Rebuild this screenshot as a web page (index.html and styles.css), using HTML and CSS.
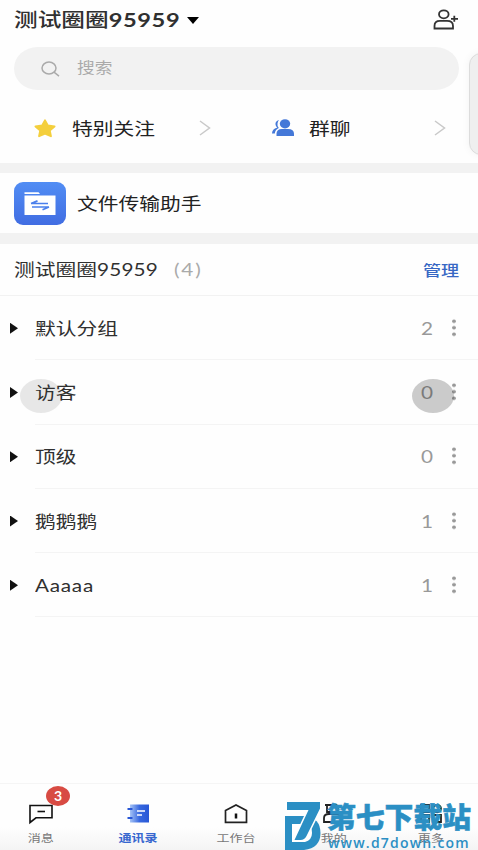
FILE: index.html
```html
<!DOCTYPE html>
<html lang="zh-CN">
<head>
<meta charset="utf-8">
<title>通讯录</title>
<link rel="stylesheet" href="styles.css">
</head>
<body>
<div class="app">
  <header class="header">
    <h1 class="title"><span class="wide">测试圈圈<b class="num">95959</b></span></h1>
    <svg class="caret" viewBox="0 0 12 7"><path d="M0 0h12L6 7z"/></svg>
    <svg class="add" viewBox="0 0 26 22"><g fill="none" stroke="#333" stroke-width="1.8"><ellipse cx="10.8" cy="5.3" rx="4.8" ry="4"/><path d="M1.5 19.5v-2.6q0-5 5.500-5h7q6 0 6 5v2.600z"/><path d="M21.300 6.800v6M18 9.800h7"/></g></svg>
  </header>
  <div class="search">
    <svg class="lens" viewBox="0 0 19 16"><g fill="none" stroke="#aaa" stroke-width="1.5"><ellipse cx="8" cy="7" rx="7" ry="5.9"/><path d="M13 11.2l5 4"/></g></svg>
    <span class="wide">搜索</span>
  </div>
  <div class="shortcuts">
    <div class="shortcut">
      <svg class="star" viewBox="0 0 22 19"><path d="M11 1.4l2.8 5.1 6.7 1-4.8 4 1.2 5.7L11 14.5l-5.9 2.7 1.2-5.7-4.8-4 6.7-1z" fill="#f4cf3c" stroke="#f4cf3c" stroke-width="2" stroke-linejoin="round"/></svg>
      <span class="label wide">特别关注</span>
      <svg class="chevron" viewBox="0 0 12 16"><path d="M1 1l9.500 7L1 15" fill="none" stroke="#c9c9c9" stroke-width="1.5"/></svg>
    </div>
    <div class="shortcut">
      <svg class="people" viewBox="0 0 22 18"><g fill="#4478d8"><ellipse cx="13" cy="4.8" rx="5.2" ry="4.6"/><path d="M4.500 17v-2.200q0-4.800 5.500-4.800h6q6 0 6 4.800V17z"/><path d="M7 1Q3 2 3.500 5.500q.2 1.800 1.800 3Q0 10 0 14.500h2.800q.3-3.800 4-5.500Q5 6.500 5.500 4.500 5.800 2 7 1z"/></g></svg>
      <span class="label wide">群聊</span>
      <svg class="chevron" viewBox="0 0 12 16"><path d="M1 1l9.500 7L1 15" fill="none" stroke="#c9c9c9" stroke-width="1.500"/></svg>
    </div>
  </div>
  <div class="band"></div>
  <div class="transfer">
    <svg class="folder" viewBox="0 0 52 43"><defs><linearGradient id="fg" x2="0" y2="1"><stop stop-color="#518df4"/><stop offset="1" stop-color="#416de2"/></linearGradient></defs><rect width="52" height="43" rx="9" fill="url(#fg)"/><path d="M10.500 10.300h14l1.500 1.700h-15.500zM10.500 13.500h31V33h-31z" fill="#fff"/><path d="M17 21.500h17M17 21.500l6.500-2.600M18 25h17M35 25l-6.500 2.700" fill="none" stroke="#4b80ec" stroke-width="1.700"/></svg>
    <span class="wide">文件传输助手</span>
  </div>
  <div class="band low"></div>
  <div class="team">
    <span class="name wide">测试圈圈<span class="num">95959</span></span>
    <span class="total wide">(4)</span>
    <a class="manage wide">管理</a>
  </div>
  <ul class="groups">
    <li class="group"><i class="arrow"></i><div class="line"><span class="wide">默认分组</span><span class="count wide">2</span><i class="dots"></i></div></li>
    <li class="group touched"><i class="arrow"></i><div class="line"><span class="wide">访客</span><span class="count wide">0</span><i class="dots"></i></div></li>
    <li class="group"><i class="arrow"></i><div class="line"><span class="wide">顶级</span><span class="count wide">0</span><i class="dots"></i></div></li>
    <li class="group"><i class="arrow"></i><div class="line"><span class="wide">鹅鹅鹅</span><span class="count wide">1</span><i class="dots"></i></div></li>
    <li class="group"><i class="arrow"></i><div class="line"><span class="wide latin">Aaaaa</span><span class="count wide">1</span><i class="dots"></i></div></li>
  </ul>
  <nav class="tabs">
    <div class="tab"><svg viewBox="0 0 26 22"><path d="M2 2.500h22v12.300H8l-6 4.700z" fill="none" stroke="#111" stroke-width="1.600"/><path d="M9.500 8.500h7.500" stroke="#111" stroke-width="1.600"/></svg><span class="wide">消息</span><em class="badge">3</em></div>
    <div class="tab active"><svg viewBox="0 0 26 22"><defs><linearGradient id="bg"><stop stop-color="#a5c3f6"/><stop offset=".5" stop-color="#3768df"/><stop offset="1" stop-color="#2857d6"/></linearGradient></defs><path d="M5 1.500h19v18H5z" fill="url(#bg)"/><path d="M2.500 6h5M2.500 15h5" stroke="#2857d6" stroke-width="1.800"/><path d="M12 8h8M12 12h5" stroke="#fff" stroke-width="1.600"/></svg><span class="wide">通讯录</span></div>
    <div class="tab"><svg viewBox="0 0 26 22"><path d="M2.500 7.500L13 2l10.500 5.500v11.800h-21z" fill="none" stroke="#222" stroke-width="1.700"/><path d="M13 10.500v5" stroke="#111" stroke-width="2.500"/></svg><span class="wide">工作台</span></div>
    <div class="tab"><svg viewBox="0 0 26 22"><g fill="none" stroke="#222" stroke-width="1.800"><path d="M5 2h10q3 0 3 3.500T15 9H7V2M4 19v-4q0-4 5-4h7q5 0 5 4v4z"/></g></svg><span class="wide">我的</span></div>
    <div class="tab"><svg viewBox="0 0 26 22"><g fill="none" stroke="#222" stroke-width="1.800"><path d="M3 2h8v7H3zM3 12h8v7H3zM15 12h8v7h-8z"/><ellipse cx="19" cy="5.500" rx="4" ry="3.500"/></g></svg><span class="wide">更多</span></div>
  </nav>
  <div class="drawer"></div>
  <div class="watermark">
    <svg class="mark" viewBox="0 0 36 48"><path d="M0 14h20q15.500 2 15.500 17T19 48H0V23z" fill="#2b8fc4"/><path d="M6 22h16q5 2 5 9t-7 9H6z" fill="#fff"/><path d="M0 22h7v26H0z" fill="#2b8fc4"/><path d="M2 0h33v6.500L21.500 34q-2 4-6 4H9.500L23.500 8H2z" fill="#2b8fc4" stroke="#fff" stroke-width="3" paint-order="stroke"/></svg>
    <div class="words"><strong class="brand">第七下载站</strong><span class="url">www.d7down.com</span></div>
  </div>
</div>
</body>
</html>
```
FILE: styles.css
```css
* { box-sizing: border-box; }
body { margin: 0; background: #fefefe; color: #303030; font: 17px/24px Lato, "Noto Sans CJK SC", sans-serif; }
svg { display: block; flex: none; }
.app { position: relative; width: 478px; height: 850px; overflow: hidden; display: flex; flex-direction: column; }
.wide { display: inline-block; white-space: nowrap; transform: scaleX(1.22); transform-origin: left center; }
.header { display: flex; align-items: center; height: 40px; padding: 0 19px 0 14px; flex: none; }
.title { margin: 0; width: 173px; font-size: 19.400px; font-weight: 500; }
.num { font-weight: inherit; letter-spacing: .15px; }
.title .num { font-weight: 700; letter-spacing: .5px; }
.caret { width: 12px; height: 7px; }
.add { width: 26px; height: 22px; margin-left: auto; }
.search { display: flex; align-items: center; height: 43px; margin: 7px 19px 0 14px; padding-left: 27px; border-radius: 24px / 22px; background: #f2f2f2; color: #aaa; font-size: 14.500px; flex: none; }
.search .wide { margin-top: -2px; }
.lens { width: 19px; height: 16px; margin-right: 17px; }
.shortcuts { display: grid; grid-template-columns: 238px 240px; height: 73px; flex: none; }
.shortcut { display: flex; align-items: center; padding: 3px 0 0 34px; }
.shortcut .label { width: 127px; padding-top: 2px; color: #222; }
.shortcut:last-child .label { width: 125px; }
.star { width: 22px; height: 19px; margin-right: 16px; }
.people { width: 22px; height: 18px; margin-right: 15px; }
.chevron { width: 12px; height: 16px; }
.band { height: 10px; background: #f2f2f2; flex: none; }
.transfer { display: flex; align-items: center; height: 60px; padding-left: 14px; color: #222; flex: none; }
.transfer .wide { padding-top: 2px; }
.folder { width: 52px; height: 43px; margin-right: 11px; }
.band.low { height: 11px; }
.team { display: flex; align-items: center; height: 52px; padding-left: 14px; border-bottom: 1px solid #f2f2f2; flex: none; }
.team .name { width: 160px; padding-top: 1px; }
.team .total { width: 249px; padding-top: 1px; color: #aaa; letter-spacing: 1.500px; }
.manage { color: #3767c4; font-size: 14.800px; font-weight: 500; }
.groups { list-style: none; margin: 0; padding: 0; }
.group { display: flex; align-items: center; position: relative; height: 64.300px; padding-left: 10px; }
.arrow { width: 8px; height: 11px; margin-right: 17px; background: #111; clip-path: polygon(0 0, 100% 50%, 0 100%); }
.line { display: flex; align-items: center; flex: 1; height: 100%; border-bottom: 1px solid #f4f4f4; }
.line .wide { padding-top: 2px; }
.latin { letter-spacing: .6px; }
.count { width: 31px; margin-left: auto; color: #999; }
.dots { width: 4px; height: 19.500px; margin-right: 22.500px; background: radial-gradient(circle, #999 1.500px, transparent 2.100px) 0 0 / 4px 6.500px; }
.touched::before, .touched::after { content: ""; position: absolute; top: 18.500px; width: 42px; height: 34px; border-radius: 50%; }
.touched::before { left: 20px; background: rgba(0, 0, 0, .09); }
.touched::after { left: 412px; background: rgba(0, 0, 0, .2); }
.tabs { display: flex; height: 67px; margin-top: auto; margin-left: -8px; border-top: 1px solid #f5f5f5; background: linear-gradient(#fefefe 65%, #f4f4f4); }
.tab { position: relative; display: flex; flex-direction: column; align-items: center; width: 97.500px; flex: none; padding-top: 19px; color: #777; font-size: 10.700px; line-height: 16px; }
.tab svg { width: 26px; height: 22px; }
.tab .wide { transform-origin: center; margin-top: 4.500px; }
.tab.active { color: #3767cf; font-weight: 700; }
.badge { position: absolute; left: 54px; top: 2px; width: 24px; height: 20px; border-radius: 50%; background: #d84b43; color: #fff; font-size: 14px; font-style: normal; font-weight: 700; line-height: 19px; text-align: center; }
.drawer { position: absolute; left: 469px; top: 53px; width: 24px; height: 102px; border: 1px solid #dcdcdc; border-radius: 14px; background: #efefef; box-shadow: 0 0 8px rgba(0, 0, 0, .05); }
.watermark { position: absolute; left: 285px; top: 802px; display: flex; color: #2b8fc4; }
.mark { width: 36px; height: 48px; }
.words { display: flex; flex-direction: column; margin-left: 6px; }
.brand { font-size: 28.800px; font-weight: 900; line-height: 32px; height: 35px; margin-top: -1px; white-space: nowrap; -webkit-text-stroke: .5px #2b8fc4; }
.url { margin-left: 1px; font-family: "Open Sans", sans-serif; font-size: 14px; font-weight: 600; line-height: 14px; letter-spacing: 1.200px; }
```
